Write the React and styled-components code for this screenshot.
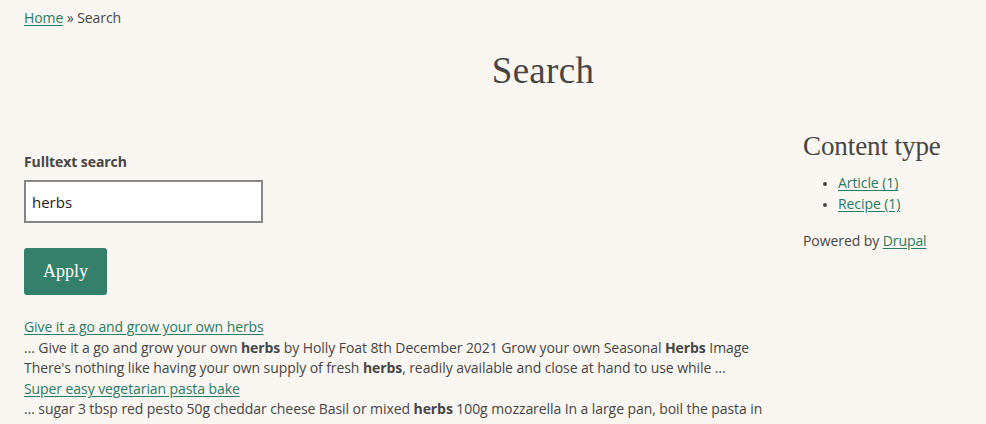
import React from 'react';
import styled, { createGlobalStyle } from 'styled-components';

const GlobalStyle = createGlobalStyle`
  html, body {
    margin: 0;
    padding: 0;
    background: #faf6f1;
  }
  body {
    font-family: "Open Sans", "Noto Sans", sans-serif;
    color: #464646;
    font-size: 14px;
    letter-spacing: -0.08px;
  }
`;

const Page = styled.div`
  padding: 8px 24px 0 24px;
`;

const Breadcrumb = styled.nav`
  line-height: 20px;
`;

const GreenLink = styled.a`
  color: #2a7b64;
  text-decoration: underline;
  text-underline-offset: 2px;
  cursor: pointer;
`;

const Title = styled.h1`
  margin: 22px 0 0 0;
  padding-left: 100px;
  text-align: center;
  font-family: "Liberation Serif", "DejaVu Serif", serif;
  font-weight: 400;
  font-size: 37px;
  line-height: 42px;
  letter-spacing: 0.3px;
  color: #464646;
`;

const Layout = styled.div`
  display: grid;
  grid-template-columns: 1fr 159px;
  gap: 20px;
  margin-top: 38px;
`;

const Main = styled.main`
  display: flex;
  flex-direction: column;
  padding-top: 22px;
`;

const Label = styled.label`
  font-weight: 700;
  line-height: 20px;
`;

const SearchInput = styled.input`
  box-sizing: border-box;
  width: 239px;
  height: 43px;
  margin-top: 8px;
  padding: 0 6px;
  border: 2px solid #858585;
  background: #fff;
  font-family: "Open Sans", sans-serif;
  font-size: 15px;
  color: #222;
  outline: none;
`;

const ApplyButton = styled.button`
  align-self: flex-start;
  width: 83px;
  height: 47px;
  margin-top: 25px;
  border: none;
  border-radius: 3px;
  background: #35806b;
  color: #fff;
  font-family: "Liberation Serif", "DejaVu Serif", serif;
  font-size: 18px;
  cursor: pointer;
`;

const Results = styled.div`
  margin-top: 22px;
  line-height: 20.5px;
`;

const Result = styled.div``;

const Excerpt = styled.p`
  margin: 0;
  b {
    font-weight: 700;
  }
`;

const Sidebar = styled.aside`
  line-height: 20.5px;
`;

const SideHeading = styled.h2`
  margin: 0;
  font-family: "Liberation Serif", "DejaVu Serif", serif;
  font-weight: 400;
  font-size: 27px;
  line-height: 32px;
  color: #464646;
`;

const FacetList = styled.ul`
  margin: 11px 0 0 0;
  padding-left: 35px;
  li::marker {
    font-size: 12px;
  }
`;

const Powered = styled.p`
  margin: 17px 0 0 0;
`;

const results = [
  {
    title: 'Give it a go and grow your own herbs',
    excerpt: (
      <>
        … Give it a go and grow your own <b>herbs</b> by Holly Foat 8th December 2021 Grow your own Seasonal{' '}
        <b>Herbs</b> Image There's nothing like having your own supply of fresh <b>herbs</b>, readily available
        and close at hand to use while …
      </>
    ),
  },
  {
    title: 'Super easy vegetarian pasta bake',
    excerpt: (
      <>
        … sugar 3 tbsp red pesto 50g cheddar cheese Basil or mixed <b>herbs</b> 100g mozzarella In a large pan,
        boil the pasta in salted water until just cooked, then drain …
      </>
    ),
  },
];

const App = () => {
  return (
    <>
      <GlobalStyle />
      <Page>
        <Breadcrumb>
          <GreenLink>Home</GreenLink> » Search
        </Breadcrumb>
        <Title>Search</Title>
        <Layout>
          <Main>
            <Label htmlFor="fulltext">Fulltext search</Label>
            <SearchInput id="fulltext" defaultValue="herbs" />
            <ApplyButton>Apply</ApplyButton>
            <Results>
              {results.map((r) => (
                <Result key={r.title}>
                  <GreenLink>{r.title}</GreenLink>
                  <Excerpt>{r.excerpt}</Excerpt>
                </Result>
              ))}
            </Results>
          </Main>
          <Sidebar>
            <SideHeading>Content type</SideHeading>
            <FacetList>
              <li><GreenLink>Article (1)</GreenLink></li>
              <li><GreenLink>Recipe (1)</GreenLink></li>
            </FacetList>
            <Powered>
              Powered by <GreenLink>Drupal</GreenLink>
            </Powered>
          </Sidebar>
        </Layout>
      </Page>
    </>
  );
};

export default App;
